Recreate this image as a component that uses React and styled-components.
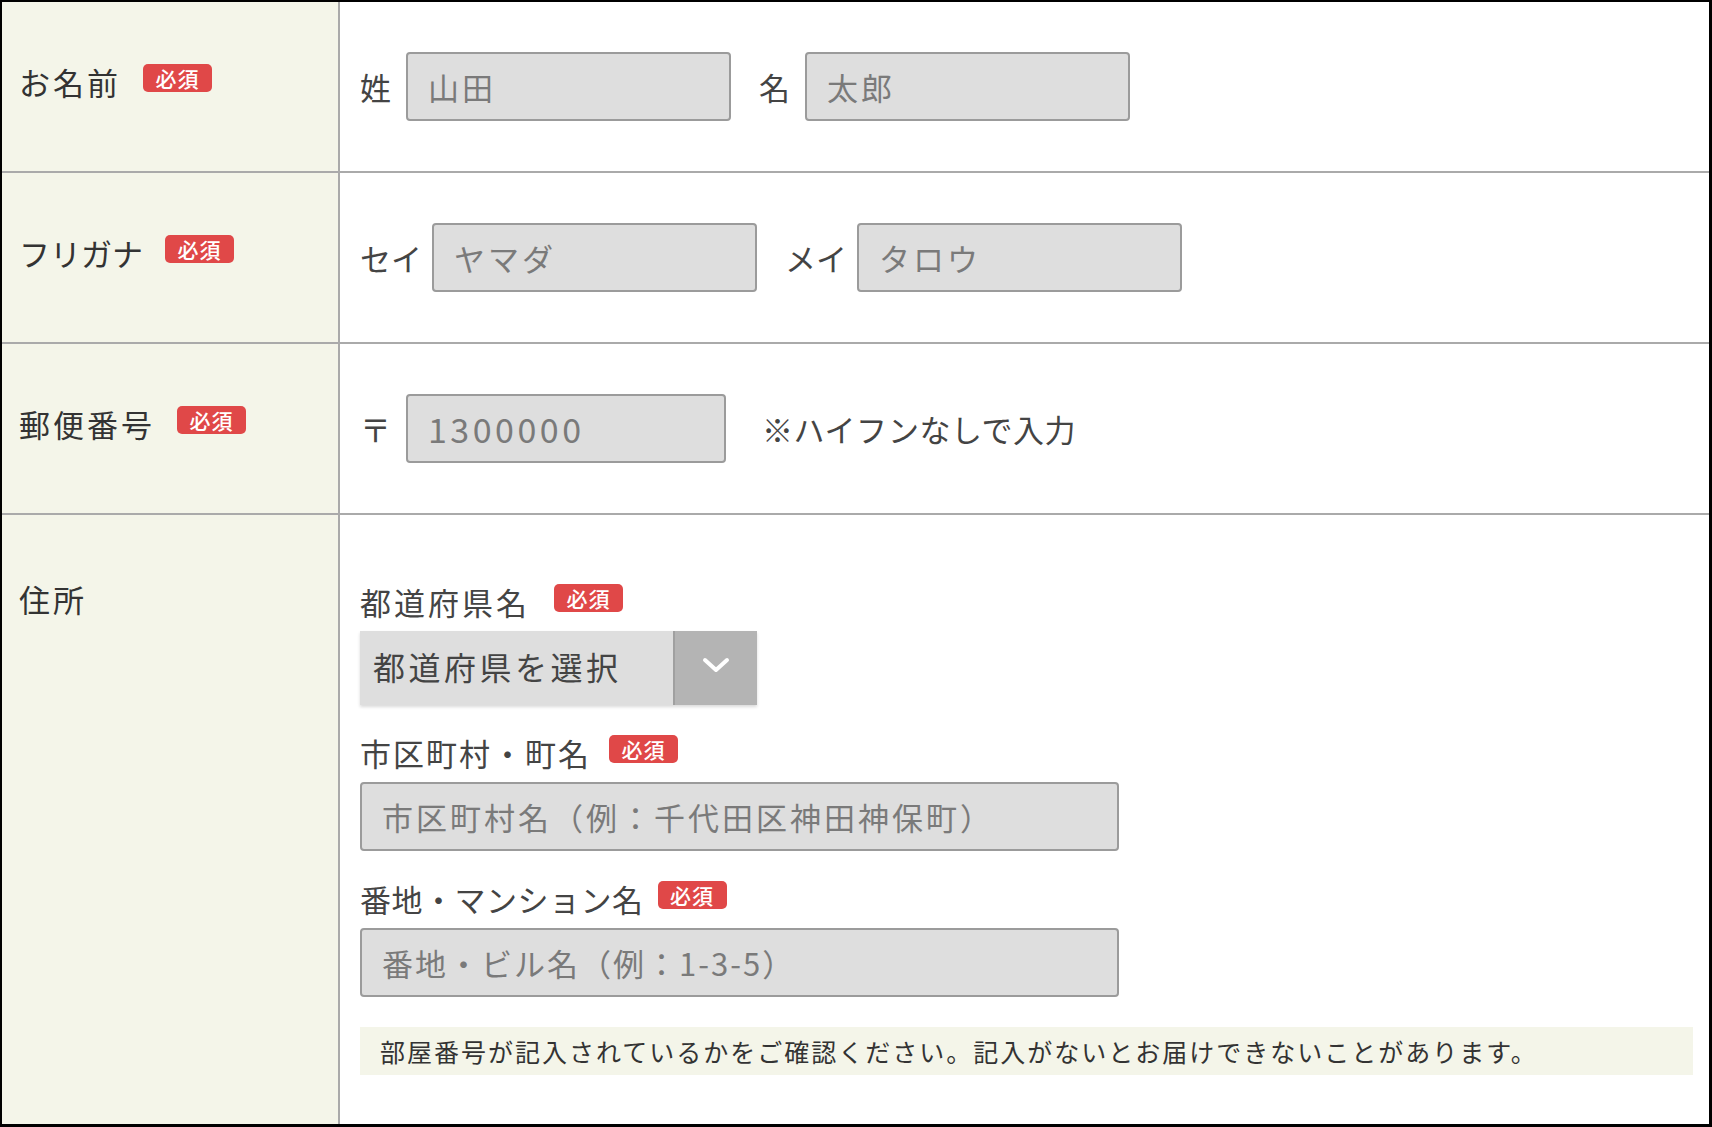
import React from "react";
import styled, { createGlobalStyle } from "styled-components";

const GlobalStyle = createGlobalStyle`
  body {
    margin: 0;
    background: #fff;
    font-family: "Noto Sans CJK JP", "Noto Sans", sans-serif;
    color: #333;
  }
`;

const Frame = styled.div`
  width: 1712px;
  height: 1127px;
  box-sizing: border-box;
  border: solid #000;
  border-width: 2px 3px 3px 2px;
  display: flex;
  flex-direction: column;
  background: #fff;
`;

const Row = styled.div`
  display: flex;
  flex: ${(p) => (p.$last ? "1" : "none")};
  height: ${(p) => (p.$last ? "auto" : "169px")};
  border-bottom: ${(p) => (p.$last ? "none" : "2px solid #aaa")};
`;

const Head = styled.div`
  width: 338px;
  flex-shrink: 0;
  box-sizing: border-box;
  background: #f4f5e9;
  border-right: 2px solid #aaa;
  padding: ${(p) => (p.$tall ? 61 : 57)}px 0 0 17px;
`;

const HeadLine = styled.div`
  height: 44px;
  display: flex;
  align-items: center;
`;

const HeadText = styled.span`
  font-size: 31px;
  letter-spacing: ${(p) => (p.$kana ? 0 : 3)}px;
  color: #333;
`;

const Badge = styled.span`
  display: inline-flex;
  align-items: center;
  justify-content: center;
  width: 69px;
  height: 28px;
  margin-left: ${(p) => (p.$gap === undefined ? 22 : p.$gap)}px;
  margin-bottom: 6px;
  background: #e04848;
  color: #fff;
  font-size: 21px;
  font-weight: 500;
  letter-spacing: 1px;
  border-radius: 5px;
`;

const Body = styled.div`
  flex: 1;
  display: flex;
  align-items: center;
  padding: 0 16px 0 20px;
`;

const AddressBody = styled.div`
  flex: 1;
  display: flex;
  flex-direction: column;
  padding: 66px 16px 0 20px;
`;

const Label = styled.span`
  font-size: 31px;
  letter-spacing: ${(p) => (p.$spacing === undefined ? 3 : p.$spacing)}px;
  color: #444;
  margin-left: ${(p) => p.$before || 0}px;
  margin-right: ${(p) => p.$after || 0}px;
  white-space: nowrap;
`;

const TextInput = styled.input`
  width: ${(p) => p.$w}px;
  height: 69px;
  box-sizing: border-box;
  border: 2px solid #9b9b9b;
  border-radius: 4px;
  background: #dedede;
  padding: 0 20px;
  font-family: inherit;
  font-size: ${(p) => p.$size || 31}px;
  letter-spacing: ${(p) => (p.$spacing === undefined ? 3 : p.$spacing)}px;
  color: #777;
  outline: none;

  &::placeholder {
    color: #7a7a7a;
  }
`;

const FieldGroup = styled.div`
  display: flex;
  flex-direction: column;
  margin-top: ${(p) => p.$top || 0}px;
`;

const FieldLabel = styled.div`
  height: 40px;
  display: flex;
  align-items: center;
  margin-bottom: 10px;
`;

const SelectWrap = styled.div`
  width: 397px;
  height: 74px;
  display: flex;
  box-shadow: 0 2px 3px rgba(0, 0, 0, 0.15);
`;

const Select = styled.select`
  flex: 1;
  appearance: none;
  border: none;
  background: #dedede;
  padding: 0 0 4px 13px;
  font-family: inherit;
  font-size: 32px;
  letter-spacing: 3.5px;
  color: #444;
  outline: none;
`;

const ArrowBox = styled.span`
  width: 84px;
  box-sizing: border-box;
  background: #b4b4b4;
  border-left: 2px solid #a0a0a0;
  display: flex;
  align-items: center;
  justify-content: center;
  padding-bottom: 6px;
`;

const Note = styled.div`
  margin-top: 30px;
  height: 48px;
  display: flex;
  align-items: center;
  padding-left: 20px;
  background: #f4f5e9;
  font-size: 25px;
  letter-spacing: 2px;
  color: #333;
`;

const Chevron = () => (
  <svg width="28" height="18" viewBox="0 0 28 18">
    <path
      d="M3 4 L14 14 L25 4"
      fill="none"
      stroke="#fff"
      strokeWidth="4"
      strokeLinecap="round"
      strokeLinejoin="round"
    />
  </svg>
);

const RowHead = ({ children, required, kana, tall }) => (
  <Head $tall={tall}>
    <HeadLine>
      <HeadText $kana={kana}>{children}</HeadText>
      {required && <Badge>必須</Badge>}
    </HeadLine>
  </Head>
);

export default function App() {
  return (
    <>
      <GlobalStyle />
      <Frame>
        <Row>
          <RowHead required>お名前</RowHead>
          <Body>
            <Label $after={12}>姓</Label>
            <TextInput $w={325} placeholder="山田" />
            <Label $before={28} $after={12}>名</Label>
            <TextInput $w={325} placeholder="太郎" />
          </Body>
        </Row>

        <Row>
          <RowHead required kana>フリガナ</RowHead>
          <Body>
            <Label $spacing={0} $after={10}>セイ</Label>
            <TextInput $w={325} placeholder="ヤマダ" />
            <Label $spacing={0} $before={28} $after={10}>メイ</Label>
            <TextInput $w={325} placeholder="タロウ" />
          </Body>
        </Row>

        <Row>
          <RowHead required>郵便番号</RowHead>
          <Body>
            <Label $after={12}>〒</Label>
            <TextInput $w={320} $size={34} $spacing={3.5} placeholder="1300000" />
            <Label $before={36} $spacing={0.5}>※ハイフンなしで入力</Label>
          </Body>
        </Row>

        <Row $last>
          <RowHead tall>住所</RowHead>
          <AddressBody>
            <FieldGroup>
              <FieldLabel>
                <Label>都道府県名</Label>
                <Badge $gap={24}>必須</Badge>
              </FieldLabel>
              <SelectWrap>
                <Select defaultValue="">
                  <option value="">都道府県を選択</option>
                  <option value="tokyo">東京都</option>
                </Select>
                <ArrowBox>
                  <Chevron />
                </ArrowBox>
              </SelectWrap>
            </FieldGroup>

            <FieldGroup $top={27}>
              <FieldLabel>
                <Label $spacing={2}>市区町村・町名</Label>
                <Badge $gap={18}>必須</Badge>
              </FieldLabel>
              <TextInput $w={759} placeholder="市区町村名（例：千代田区神田神保町）" />
            </FieldGroup>

            <FieldGroup $top={27}>
              <FieldLabel>
                <Label $spacing={0.5}>番地・マンション名</Label>
                <Badge $gap={14}>必須</Badge>
              </FieldLabel>
              <TextInput $w={759} $spacing={2} placeholder="番地・ビル名（例：1-3-5）" />
            </FieldGroup>

            <Note>
              部屋番号が記入されているかをご確認ください。記入がないとお届けできないことがあります。
            </Note>
          </AddressBody>
        </Row>
      </Frame>
    </>
  );
}
